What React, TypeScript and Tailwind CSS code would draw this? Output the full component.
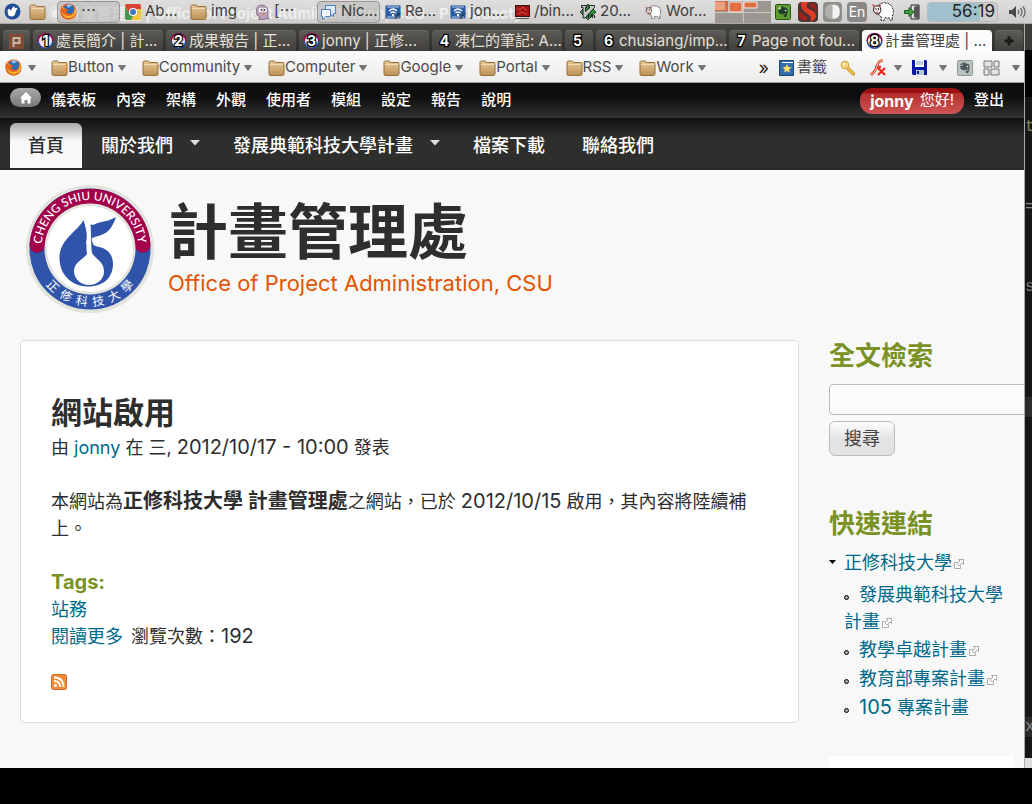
import type { ReactNode } from "react";

const FONT = "font-['Inter','Noto_Sans_CJK_TC',sans-serif]";

function Triangle({ className = "" }: { className?: string }) {
  return (
    <svg width="8" height="6" viewBox="0 0 8 6" className={"shrink-0 " + className} aria-hidden="true">
      <path d="M0.5 0.5h7L4 5.5z" fill="#777" stroke="#5a5a5a" strokeWidth="0.7" />
    </svg>
  );
}

function Folder() {
  return (
    <svg width="17" height="16" viewBox="0 0 17 16" className="shrink-0" aria-hidden="true">
      <defs>
        <linearGradient id="folder" x1="0" y1="0" x2="0" y2="1">
          <stop offset="0" stopColor="#e6c998" />
          <stop offset="1" stopColor="#bd9155" />
        </linearGradient>
      </defs>
      <path d="M1 2.5q0-1.5 1.500-1.500h4l1 1.500H15q1 0 1 1V14q0 1.500-1.500 1.500h-12Q1 15.500 1 14z" fill="url(#folder)" stroke="#94713f" />
      <path d="M2 4.500h13" stroke="#f0dcb8" />
    </svg>
  );
}

function Firefox() {
  return (
    <svg width="17" height="17" viewBox="0 0 17 17" className="shrink-0" aria-hidden="true">
      <circle cx="8.500" cy="8.500" r="8" fill="#d9541e" />
      <circle cx="9" cy="7" r="5.500" fill="#2a6db5" />
      <path d="M6 2.500q3-2.500 6.500 0-2.500 0-3.500 2.500z" fill="#8cc4ea" />
      <path d="M1 3q1 2 3 2.500 3-.5 4.500 1.500L6.500 8q0 3 3.500 3Q14 11 14.500 4.500q2.500 3.500 1.500 7-2 5-7.500 5Q1 16 .5 9q0-4 .5-6z" fill="#e8641b" />
      <path d="M14.500 3.500q1.500 9-5.500 9.500Q4 13 2 8.500q.5 6 6.500 6.500 6.500-.5 7.500-6-.3-3.500-1.500-5.500z" fill="#f7b733" />
      <path d="M2 4q1.500 1.500 2.500 1.500" stroke="#f9c24a" fill="none" />
    </svg>
  );
}

function Chrome() {
  return (
    <svg width="16" height="16" viewBox="0 0 16 16" className="shrink-0" aria-hidden="true">
      <rect width="16" height="16" rx="2" fill="#f2c63a" />
      <path d="M0 2q0-2 2-2h12q2 0 2 2v3H8L4 9z" fill="#d84336" />
      <path d="M0 3l5 7 3 2-2 4H2q-2 0-2-2z" fill="#40994c" />
      <circle cx="8" cy="8" r="4" fill="#fff" />
      <circle cx="8" cy="8" r="3" fill="#3f78c8" />
    </svg>
  );
}

function Mouse() {
  return (
    <svg width="17" height="17" viewBox="0 0 17 17" className="shrink-0" aria-hidden="true">
      <circle cx="8.500" cy="8.500" r="8" fill="#1f4e94" />
      <path d="M4 6q2.500-.5 3 2 .5-3 2.500-4.500Q11.500 3 10.500 5.500q2.500-1.500 3 .5-2 1-2 4-1 3.500-4 3.500T4 11q-1-3 0-5z" fill="#fff" />
    </svg>
  );
}

function Pidgin() {
  return (
    <svg width="15" height="16" viewBox="0 0 15 16" className="shrink-0" aria-hidden="true">
      <path d="M1.500 8q-.5-7 5.500-7 6.500 1 6 8l-.5 3 1.500 3-3-.5-2 1H4l.5-3L2 11z" fill="#b9a0bd" stroke="#8b7590" />
      <circle cx="6" cy="6" r="2.300" fill="#fff" />
      <circle cx="10" cy="6" r="2" fill="#fff" />
      <circle cx="6.500" cy="6" r="1" fill="#333" />
      <circle cx="9.500" cy="6" r="1" fill="#333" />
      <path d="M6 9h4l-2 2.500z" fill="#d9903a" />
    </svg>
  );
}

function Chat() {
  return (
    <svg width="17" height="16" viewBox="0 0 17 16" className="shrink-0" aria-hidden="true">
      <path d="M5.500 1.500h10v8h-2v3l-3-3h-5z" fill="#dce9f8" stroke="#4c7fbd" />
      <path d="M1.500 5.500h9v7h-5l-3 3v-3h-1z" fill="#f2f7fd" stroke="#4c7fbd" />
    </svg>
  );
}

function Writer() {
  return (
    <svg width="16" height="16" viewBox="0 0 16 16" className="shrink-0" aria-hidden="true">
      <rect x=".5" y="1.500" width="15" height="13" rx="1" fill="#2c5ea8" stroke="#7895bd" />
      <path d="M2 3h12M2 13h12" stroke="#b8c9e2" />
      <path d="M4 7q4-4 8 0M5.500 9q2.500-2 5 0" stroke="#fff" strokeWidth="1.300" fill="none" />
      <circle cx="8" cy="11" r="1.200" fill="#fff" />
      <path d="M10 14.500l5-5.500" stroke="#333" strokeWidth="1.500" />
    </svg>
  );
}

function Terminal() {
  return (
    <svg width="15" height="14" viewBox="0 0 15 14" className="shrink-0" aria-hidden="true">
      <rect x=".5" y=".5" width="14" height="11" fill="#a31616" stroke="#3b1111" />
      <path d="M2 3l3 2 3-3 4 4M3 9l4-2 5 2" stroke="#d95050" fill="none" />
      <path d="M1 13.500h13" stroke="#555" />
    </svg>
  );
}

function Vim() {
  return (
    <svg width="16" height="16" viewBox="0 0 16 16" className="shrink-0" aria-hidden="true">
      <path d="M8 0l8 8-8 8-8-8z" fill="#2a9138" stroke="#123" strokeWidth=".7" />
      <path d="M1.500 1.500h5v2H5.500v4l4.500-4H9v-2h5.500v2L5 14H3V3.500H1.500z" fill="#c8c8c8" stroke="#111" strokeWidth=".9" />
      <path d="M8 14l1-4M10.500 14l1-3.500 1.500 1-.5 2.500M14 11l1 3" stroke="#111" fill="none" />
    </svg>
  );
}

function Sheep({ large = false }: { large?: boolean }) {
  return (
    <svg width={large ? 23 : 17} height={large ? 19 : 14} viewBox="0 0 23 19" className="shrink-0" aria-hidden="true">
      <path
        d="M7 4q0-3 3-2.500Q12-.5 14 1.500q3-1 3.500 1.500 3 0 2.500 3 2.500 1.500 1 4 1 2.500-1 4l.5 4h-2.500l-1-2.500q-2 1-4 0l-1 3h-3l.5-3.500Q6 14 7 11 4 8 7 4z"
        fill="#fff"
        stroke="#222"
        strokeDasharray="2.500 1"
      />
      <path d="M2 4.500Q5 3 8 4.500l1 4-2 3.500H4L1.500 9z" fill="#fbeaea" stroke="#222" />
      <path d="M.5 2.500l2 2M8.500 2.500L7.500 5M4 10.500h2" stroke="#c44" strokeWidth="1.300" />
      <path d="M3.500 7h1M6 7h1" stroke="#000" strokeWidth="1.500" />
    </svg>
  );
}

function Evernote({ muted = false }: { muted?: boolean }) {
  return (
    <svg width="16" height="16" viewBox="0 0 16 16" className="shrink-0" aria-hidden="true">
      <rect x=".5" y=".5" width="15" height="15" rx="1" fill={muted ? "#b9c3c1" : "#5c9c31"} stroke={muted ? "#8b9896" : "#2c5217"} />
      <path d="M6 2.500Q8 2 9 3.500q3-.5 3.500 2 .5 4-1 7-2 1.500-3-.5 0-2 2-1.500V9Q8 11 5.500 10 3 9 3 6l3-.5z" fill={muted ? "#4c5a5a" : "#243d2a"} />
      <path d="M5.500 2L3 5h2.500z" fill={muted ? "#4c5a5a" : "#dfeed5"} />
      <circle cx="10.500" cy="6.500" r=".8" fill="#fff" />
    </svg>
  );
}

interface Task { icon: ReactNode; label: string; framed?: boolean }

const tasks: Task[] = [
  { icon: <Firefox />, label: "⋯", framed: true },
  { icon: <Chrome />, label: "Ab..." },
  { icon: <Folder />, label: "img" },
  { icon: <Pidgin />, label: "[⋯" },
  { icon: <Chat />, label: "Nic...", framed: true },
  { icon: <Writer />, label: "Re..." },
  { icon: <Writer />, label: "jon..." },
  { icon: <Terminal />, label: "/bin..." },
  { icon: <Vim />, label: "20..." },
  { icon: <Sheep />, label: "Wor..." },
];

function DesktopPanel() {
  return (
    <header className="relative flex h-6 items-center overflow-hidden border-b border-[#aaa9a7] bg-linear-to-b from-[#dfdedd] to-[#cfcecc] text-[15px] text-[#3c3c3c]">
      <div className="pointer-events-none absolute top-0 left-12 whitespace-nowrap text-[15px] leading-7 font-bold text-white/60">
        ◉ 計畫管理處 | Office of Project Administration, CSU - Pentadactyl
      </div>
      <div className="relative flex shrink-0 items-center gap-2 pl-1">
        <Mouse />
        <Folder />
      </div>
      <nav className="relative ml-[11px] flex min-w-0 shrink-0 gap-0.5" aria-label="Windows">
        {tasks.map((t, i) => (
          <button
            key={i}
            className={
              t.framed
                ? "flex h-[22px] w-[63px] items-center gap-1 rounded-sm border border-[#989795] bg-[#b4b3b1]/50 px-0.5 whitespace-nowrap"
                : "flex h-[22px] w-[63px] items-center gap-1 px-[3px] whitespace-nowrap"
            }
          >
            {t.icon}
            <span>{t.label}</span>
          </button>
        ))}
      </nav>
      <svg width="56" height="22" viewBox="0 0 56 22" className="ml-2.5 shrink-0" aria-hidden="true">
        <path d="M0 0h56v22H0z" fill="#9b9791" />
        <path d="M0 11.500h56M28.500 0v22" stroke="#c9c6c1" />
        <path d="M0 0h13v10H0z" fill="#d56c45" />
        <path d="M0 1h10v8H0z" fill="#eaa184" />
        <path d="M14 1h13v10H14zM29 1h13v6H29z" fill="#df6f42" stroke="#eee" />
      </svg>
      <div className="ml-1 flex flex-1 items-center gap-[5px]">
        <Evernote />
        <svg width="20" height="20" viewBox="0 0 20 20" className="ml-0.5 shrink-0" aria-hidden="true">
          <rect width="20" height="20" rx="4" fill="#4a3330" />
          <path d="M3 0h8Q6 4 11 7q8 3 7 8-2 4-6 5 3-5-2-8-8-4-7-12z" fill="#df3a26" />
          <path d="M1 6q1 6 7 8 3 2 0 5-6-1-7-6zM13 1q6 1 6 8-2-2-6-4-2-2 0-4z" fill="#a32119" />
        </svg>
        <svg width="19" height="20" viewBox="0 0 19 20" className="shrink-0" aria-hidden="true">
          <rect width="19" height="20" rx="4" fill="#8f8e8b" />
          <rect x="2" y="2" width="15" height="15" rx="6" fill="#b0afac" />
          <path d="M9.500 3h2a5 5 0 0 1 5 5v3.500a5 5 0 0 1-5 5h-2z" fill="#f3f3f3" />
        </svg>
        <span className="flex h-5 w-5 shrink-0 items-center justify-center rounded-sm bg-[#898886] text-sm text-white">En</span>
        <Sheep large />
        <svg width="16" height="16" viewBox="0 0 16 16" className="ml-1 shrink-0" aria-hidden="true">
          <path d="M7 1h8v14H7z" fill="#ddd" stroke="#222" />
          <path d="M10 3l5-2v14l-5-2z" fill="#555" />
          <path d="M.5 6.500H5V3.500l5 4.500-5 4.500v-3H.5z" fill="#43a047" stroke="#155c1c" />
        </svg>
        <time className="ml-0.5 flex h-5 w-[71px] shrink-0 items-center justify-end rounded-sm border border-[#bab9b7] bg-linear-to-r from-[#9fc1cd] from-75% to-[#d0cfcd] to-75% pr-0.5 text-[17px] text-[#222]">
          56:19
        </time>
        <svg width="18" height="14" viewBox="0 0 18 14" className="ml-auto mr-1.5 shrink-0" aria-hidden="true">
          <path d="M1 5h3l4-4v12L4 9H1z" fill="#4a4a4a" />
          <path d="M10 5q1.500 2 0 4M12.500 3q3 4 0 8M15 1.500q4 5.500 0 11" stroke="#6a6a6a" strokeWidth="1.300" fill="none" />
        </svg>
      </div>
    </header>
  );
}

const tabs = [
  { n: "1", title: "處長簡介 | 計...", crest: true },
  { n: "2", title: "成果報告 | 正...", crest: true },
  { n: "3", title: "jonny | 正修...", crest: true },
  { n: "4", title: "凍仁的筆記: A..." },
  { n: "5", title: "" },
  { n: "6", title: "chusiang/imp..." },
  { n: "7", title: "Page not fou..." },
  { n: "8", title: "計畫管理處 | ...", crest: true, active: true },
];

function TabIcon({ n, crest, active }: { n: string; crest?: boolean; active?: boolean }) {
  return (
    <svg width="17" height="18" viewBox="0 0 17 18" className="shrink-0" aria-hidden="true">
      {crest && (
        <>
          <circle cx="8.500" cy="9" r="8" fill="#2b4c9b" />
          <path d="M.5 9a8 8 0 0 1 16 0z" fill="#a5004a" />
          <circle cx="8.500" cy="9" r="6.500" fill={active ? "#fff" : "#e8e8f0"} />
        </>
      )}
      <text
        x="8.500"
        y="14"
        textAnchor="middle"
        fontSize="14"
        fontWeight="bold"
        fill="#fff"
        stroke="#000"
        strokeWidth="2.500"
        paintOrder="stroke"
      >
        {n}
      </text>
    </svg>
  );
}

function TabStrip() {
  const dark = "rounded-t border-t border-[#6a6965] bg-linear-to-b from-[#5b5a56] to-[#413f3c] text-[#e4e0d8]";
  return (
    <div className="flex h-[27px] items-end gap-[3px] bg-linear-to-b from-[#454440] to-[#31302d] pl-[3px] text-[15px]">
      <button aria-label="Pinned tab" className={"flex h-[21px] w-[27px] shrink-0 items-center justify-center " + dark}>
        <svg width="15" height="15" viewBox="0 0 15 15" aria-hidden="true">
          <path d="M0 0h15v15H0z" fill="#834c32" />
          <path d="M4.500 13V4h6v5h-6" stroke="#c7b6a9" strokeWidth="2" fill="none" />
        </svg>
      </button>
      {tabs.map((t) => (
        <button
          key={t.n}
          aria-label={t.title || "Tab " + t.n}
          className={
            "flex h-[21px] items-center gap-0.5 pl-1 whitespace-nowrap " +
            (t.title ? "w-[130px] " : "w-7 ") +
            (t.active ? "rounded-t bg-[#fcfcfc] text-[#444]" : dark)
          }
        >
          <TabIcon n={t.n} crest={t.crest} active={t.active} />
          {t.title && <span className="leading-5">{t.title}</span>}
        </button>
      ))}
      <button aria-label="New tab" className={"flex h-[21px] w-7 items-center justify-center " + dark}>
        <svg width="12" height="12" viewBox="0 0 12 12" aria-hidden="true">
          <path d="M4 1h4v3h3v4H8v3H4V8H1V4h3z" fill="#1b1b1a" stroke="#66645f" strokeWidth=".6" />
        </svg>
      </button>
    </div>
  );
}

const bookmarks = ["Button", "Community", "Computer", "Google", "Portal", "RSS", "Work"];

function BookmarkBar() {
  return (
    <div className="flex h-8 items-center border-b border-[#9d9d9d] bg-linear-to-b from-[#fbfbfb] to-[#ececeb] pt-0.5 pr-1 pl-[5px] text-[15px] text-[#4a4a4a]">
      <button aria-label="Firefox menu" className="flex items-center gap-1.5">
        <Firefox />
        <Triangle />
      </button>
      <nav className="ml-[15px] flex items-center gap-4" aria-label="Bookmarks">
        {bookmarks.map((b) => (
          <button key={b} className="flex items-center">
            <Folder />
            <span>{b}</span>
            <Triangle className="ml-1" />
          </button>
        ))}
      </nav>
      <div className="ml-auto flex items-center gap-2.5">
        <button aria-label="More bookmarks" className="text-lg leading-5 text-[#222]">»</button>
        <button className="flex items-center gap-[3px]">
          <svg width="15" height="16" viewBox="0 0 15 16" aria-hidden="true">
            <path d="M.5.500h14v15H.5z" fill="#336eaa" stroke="#1c4577" />
            <path d="M3 2.500h11" stroke="#fff" />
            <path d="M8 4l1.300 3 3.200.3-2.400 2.100.7 3.100L8 10.900l-2.800 1.600.7-3.100-2.400-2.100L6.700 7z" fill="#ffe168" />
          </svg>
          書籤
        </button>
        <svg width="16" height="16" viewBox="0 0 16 16" className="ml-[3px]" aria-hidden="true">
          <path d="M7.500 6l7 7v2h-2L5.500 8" fill="#f3c34f" stroke="#c28a23" />
          <circle cx="5" cy="5" r="3.800" fill="#f8d575" stroke="#d39b35" />
          <circle cx="4" cy="4" r="1.200" fill="#fff" />
        </svg>
        <button aria-label="Flash blocker" className="ml-[3px] flex items-center gap-2">
          <svg width="17" height="17" viewBox="0 0 17 17" aria-hidden="true">
            <path d="M14 1.500Q10 1.500 8.500 6 6 14 1.500 15.500M6 8h6" stroke="#d8381f" strokeWidth="2.500" fill="none" />
            <path d="M14 1.500Q10 1.500 8.500 6 6 14 1.500 15.500" stroke="#fff" strokeWidth=".8" fill="none" />
            <path d="M9 9l7 7M16 9l-7 7" stroke="#f02015" strokeWidth="2" />
          </svg>
          <Triangle />
        </button>
        <button aria-label="Save" className="flex items-center gap-3">
          <svg width="15" height="15" viewBox="0 0 15 15" aria-hidden="true">
            <path d="M0 0h14l1 1v14H1l-1-1z" fill="#0717a8" />
            <path d="M3 0h9v7H3z" fill="#fff" />
            <path d="M4 2h7M4 4h7" stroke="#7a9ab5" />
            <path d="M4 10h8v5H4z" fill="#b9c8d3" />
            <path d="M5 11h2v3H5z" fill="#0717a8" />
          </svg>
          <Triangle />
        </button>
        <Evernote muted />
        <button aria-label="Tab groups" className="flex items-center gap-3">
          <svg width="17" height="16" viewBox="0 0 17 16" aria-hidden="true">
            <path d="M1 1h8v6H1zM11 1h5v6h-5zM1 9h5v6H1zM8 9h8v6H8z" fill="#e2e2e0" stroke="#777" />
          </svg>
          <Triangle />
        </button>
      </div>
    </div>
  );
}

const adminLinks = ["儀表板", "內容", "架構", "外觀", "使用者", "模組", "設定", "報告", "說明"];

function AdminBar() {
  return (
    <div className="flex h-[35px] items-center bg-linear-to-b from-[#0e0e0e] from-40% to-[#333] px-2.5 text-[15px] text-white">
      <a href="#" aria-label="Home" className="mb-1.5 flex h-[19px] w-[31px] items-center justify-center rounded-full bg-linear-to-b from-[#aaa] to-[#777]">
        <svg width="12" height="12" viewBox="0 0 12 12" aria-hidden="true">
          <path d="M6 0l6 6h-1.500v5.500H7.500V8h-3v3.500H1.500V6H0z" fill="#fff" />
        </svg>
      </a>
      <nav className="ml-2.5 flex gap-5 font-medium" aria-label="Administration">
        {adminLinks.map((l) => (
          <a key={l} href="#">{l}</a>
        ))}
      </nav>
      <a href="#" className="ml-auto flex h-[26px] items-center rounded-xl bg-linear-to-b from-[#981212] from-20% via-[#b22f2f] via-20% to-[#cf5454] px-2.5">
        <strong className="mr-1.5 text-base">jonny</strong>您好!
      </a>
      <a href="#" className="mr-2.5 ml-2.5 font-medium">登出</a>
    </div>
  );
}

const menu = [
  { label: "首頁", active: true },
  { label: "關於我們", more: true },
  { label: "發展典範科技大學計畫", more: true },
  { label: "檔案下載" },
  { label: "聯絡我們" },
];

function MainMenu() {
  return (
    <nav className="flex h-[52px] gap-px border-b-2 border-[#282626] bg-linear-to-b from-[#131312] to-[#2e2e2c] to-40% px-2.5 pt-[5px] text-lg font-medium" aria-label="Main menu">
      {menu.map((m) => (
        <a
          key={m.label}
          href="#"
          className={
            m.active
              ? "flex items-center rounded-t-md bg-linear-to-b from-[#aaa] to-[#f8f8f8] to-40% px-[18px] pt-px text-[#2e2e2e]"
              : "flex items-center px-[18px] pt-px text-white"
          }
        >
          {m.label}
          {m.more && (
            <svg width="10" height="6" viewBox="0 0 10 6" className="-mr-1 mb-1.5 ml-[17px]" aria-hidden="true">
              <path d="M0 0h10L5 5.500z" fill="#ddd" />
            </svg>
          )}
        </a>
      ))}
    </nav>
  );
}

const crestChars = [
  { c: "正", turn: "rotate(45 64 64)" },
  { c: "修", turn: "rotate(27 64 64)" },
  { c: "科", turn: "rotate(9 64 64)" },
  { c: "技", turn: "rotate(-9 64 64)" },
  { c: "大", turn: "rotate(-27 64 64)" },
  { c: "學", turn: "rotate(-45 64 64)" },
];

function Crest() {
  return (
    <svg width="128" height="128" viewBox="0 0 128 128" className="shrink-0" role="img" aria-label="Cheng Shiu University">
      <defs>
        <path id="arcTop" d="M15.500 64a48.500 48.500 0 0 0 .2 4A48.500 48.500 0 1 1 112.300 68" />
      </defs>
      <circle cx="64" cy="64" r="64" fill="#e2e3dc" />
      <circle cx="64" cy="64" r="60.500" fill="#3054a9" />
      <path d="M11.200 60A53 53 0 0 1 116.800 60" fill="none" stroke="#a2004b" strokeWidth="15.500" strokeLinecap="round" />
      <circle cx="64" cy="64" r="45.500" fill="#e2e3dc" />
      <circle cx="64" cy="64" r="43" fill="#fff" />
      <path
        d="M57.500 35C51 47 34 54 33.500 72 33 88 44 101 61 101.500 78 102 87 92 87 79c0-10-6-16-16-17.500-4-.8-5-4-5-8.500C76 49.500 84 50 90 32c-8 5-15 4-22 7.500-2 1-3 0-3.500-.5 1 15 .5 25 1.500 29 3 6 12 8 12 18.500 0 8-7 13.500-15 13.500s-15-6-15-14C48 77 58 74 61 69c-1-4 0-8-1-12 2-6 0-14-2.500-22z"
        fill="#3054a9"
      />
      <text fill="#fff" fontSize="11.800" fontWeight="500" textAnchor="middle" className="font-['Lato',sans-serif]">
        <textPath href="#arcTop" startOffset="51%">CHENG SHIU UNIVERSITY</textPath>
      </text>
      <g fill="#fff" fontSize="12" textAnchor="middle" className="font-['Noto_Sans_CJK_TC',sans-serif]">
        {crestChars.map(({ c, turn }) => (
          <text key={c} x="64" y="121" transform={turn}>{c}</text>
        ))}
      </g>
    </svg>
  );
}

function ExternalMark() {
  return (
    <svg width="10" height="10" viewBox="0 0 10 10" className="ml-0.5 inline-block align-baseline" aria-hidden="true">
      <path d="M3.500 3.500h-3v6h6v-3M4.500.500h5v5l-1.500-1.500-3 3-2-2 3-3z" fill="#fff" stroke="#aaa" />
    </svg>
  );
}

function Num({ children }: { children: ReactNode }) {
  return <span className="text-[20px] leading-none">{children}</span>;
}

function Article() {
  return (
    <article className="min-w-0 flex-1 rounded-[5px] border border-[#ddd] bg-white px-[30px] pt-[52px] pb-8 text-lg leading-[27px] text-[#2e2e2e]">
      <h2 className="text-[31px] leading-10 font-bold">網站啟用</h2>
      <p className="mt-px">
        由 <a href="#" className="text-[#006a8a]">jonny</a> 在 三, <Num>2012/10/17 - 10:00</Num> 發表
      </p>
      <p className="mt-[27px]">
        本網站為<strong className="text-[20px] leading-none">正修科技大學 計畫管理處</strong>之網站，已於 <Num>2012/10/15</Num> 啟用，其內容將陸續補上。
      </p>
      <h3 className="mt-[27px] text-[20px] leading-[27px] font-bold text-[#7a9224]">Tags:</h3>
      <p><a href="#" className="text-[#006a8a]">站務</a></p>
      <p>
        <a href="#" className="mr-2 text-[#006a8a]">閱讀更多</a>瀏覽次數：<Num>192</Num>
      </p>
      <a href="#" aria-label="RSS" className="mt-6 block w-4">
        <svg width="16" height="16" viewBox="0 0 16 16" aria-hidden="true">
          <rect x=".5" y=".5" width="15" height="15" rx="2" fill="#f28b3c" stroke="#d5662a" />
          <circle cx="4.500" cy="11.500" r="1.500" fill="#fff" />
          <path d="M3 7q6 0 6 6M3 3.500q9.500 0 9.500 9.500" stroke="#fff" strokeWidth="1.800" fill="none" />
        </svg>
      </a>
    </article>
  );
}

function Sidebar() {
  const heading = "text-[26px] leading-8 font-bold text-[#7a9224]";
  const bullet = "before:mr-2.5 before:inline-block before:h-[5px] before:w-[5px] before:rounded-full before:border before:border-black before:bg-[#aaa] before:align-[1px]";
  return (
    <aside className="w-[185px] shrink-0 text-lg text-[#006a8a]">
      <h2 className={heading}>全文檢索</h2>
      <form className="mt-3" onSubmit={(e) => e.preventDefault()}>
        <input aria-label="全文檢索" className="block h-[31px] w-[230px] rounded-sm border border-[#bbb] bg-[#fbfbfb] px-2" />
        <button className="mt-1.5 h-[35px] rounded-md border border-[#bbb] bg-linear-to-b from-[#fefefe] to-[#e3e3e3] to-50% px-3.5 leading-6 text-[#444]">搜尋</button>
      </form>
      <h2 className={heading + " mt-[52px]"}>快速連結</h2>
      <div className="mt-2 leading-[29px]">
        <div className="flex items-center">
          <svg width="8" height="5" viewBox="0 0 8 5" className="mr-[7px]" aria-hidden="true">
            <path d="M0 0h7L3.500 4z" fill="#000" />
          </svg>
          <a href="#">正修科技大學<ExternalMark /></a>
        </div>
        <ul className="pl-[15px]">
          <li className={bullet + " mt-1 leading-[27px]"}><a href="#">發展典範科技大學計畫<ExternalMark /></a></li>
          <li className={bullet}><a href="#">教學卓越計畫<ExternalMark /></a></li>
          <li className={bullet}><a href="#">教育部專案計畫<ExternalMark /></a></li>
          <li className={bullet}><a href="#"><Num>105</Num> 專案計畫</a></li>
        </ul>
      </div>
      <div className="mt-[34px] h-3 bg-white" />
    </aside>
  );
}

function BackgroundEditor() {
  return (
    <div className="flex w-[7px] shrink-0 flex-col overflow-hidden bg-[#171717] font-['Liberation_Mono',monospace] text-[16px] leading-5 text-[#888]" aria-hidden="true">
      <div className="h-[26px] bg-[#3c3b37]" />
      <div className="h-[47px] bg-black" />
      <div className="h-5" />
      <div className="h-5 text-[#7a8a55]">t</div>
      <div className="mt-[60px] h-5">=</div>
      <div className="mt-[60px] h-5 text-[#777]">s</div>
      <div className="mt-[100px] h-5 bg-[#2c2c2c]" />
      <div className="mt-[300px] h-5 bg-[#2c2c2c]">x</div>
      <div className="mt-auto h-2.5 bg-[#ddd]" />
    </div>
  );
}

export default function App() {
  return (
    <div className={"flex min-h-screen flex-col overflow-hidden bg-black " + FONT}>
      <DesktopPanel />
      <div className="flex">
        <div className="min-w-0 flex-1 overflow-hidden border-r border-[#aaa] bg-[#f8f8f8]">
          <TabStrip />
          <BookmarkBar />
          <AdminBar />
          <MainMenu />
          <header className="flex gap-3.5 pt-[15px] pl-[26px]">
            <Crest />
            <div className="pt-[13px]">
              <h1 className="text-[60px] leading-[68px] font-bold text-[#2e2e2e]">計畫管理處</h1>
              <p className="text-[22px] leading-[34px] text-[#e25401]">Office of Project Administration, CSU</p>
            </div>
          </header>
          <main className="flex items-start gap-[30px] pt-[27px] pr-2.5 pl-5">
            <Article />
            <Sidebar />
          </main>
        </div>
        <BackgroundEditor />
      </div>
    </div>
  );
}
